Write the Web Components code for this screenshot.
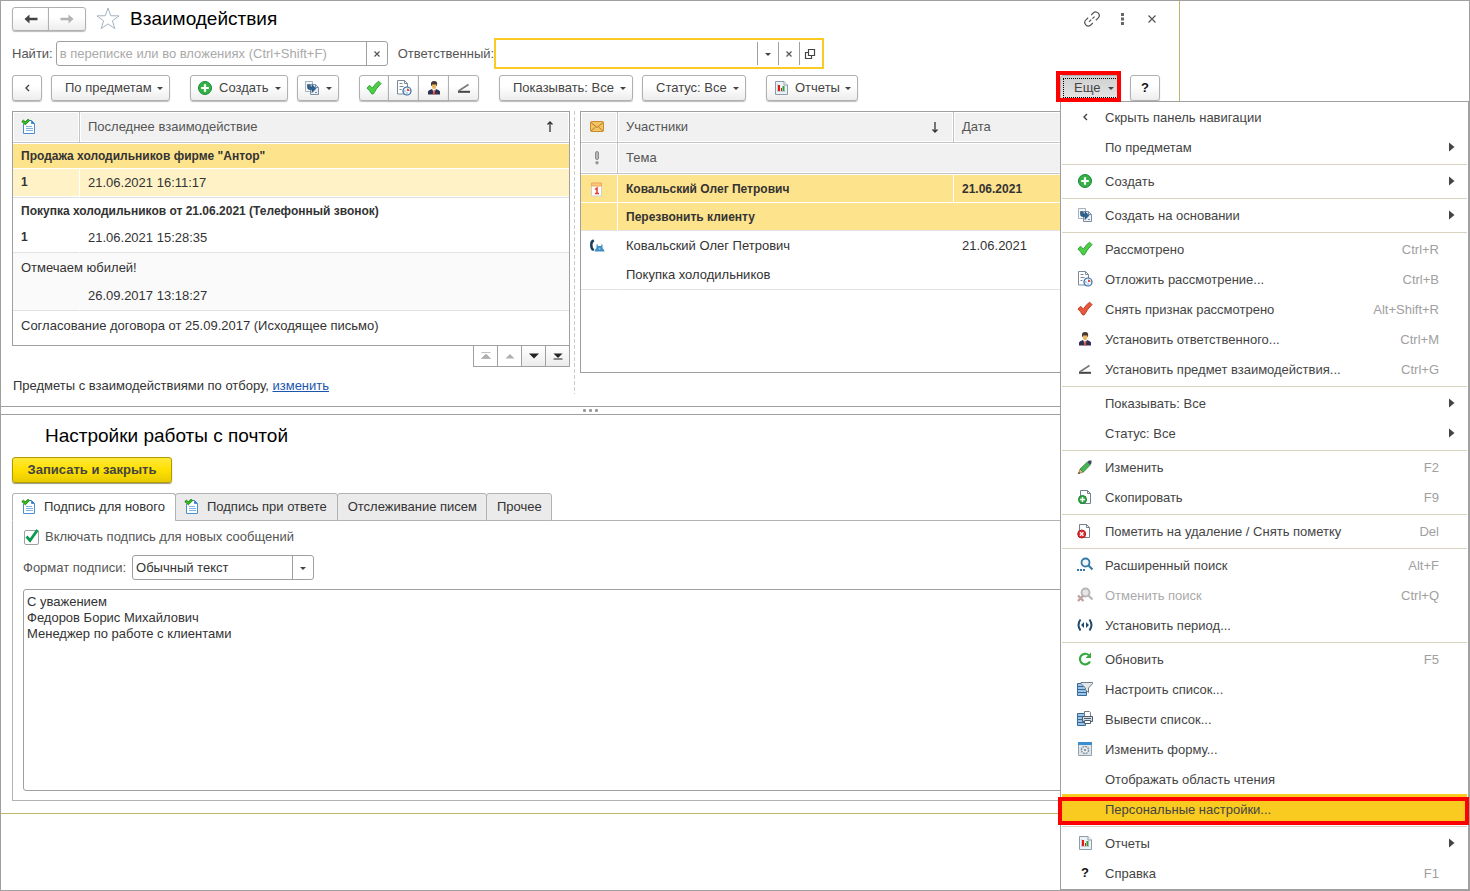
<!DOCTYPE html>
<html lang="ru">
<head>
<meta charset="utf-8">
<title>Взаимодействия</title>
<style>
  body { margin: 0; background: #fff; color: #333; font: 13px/16px "Liberation Sans", Arial, sans-serif; }
</style>
</head>
<body>
<app-shell></app-shell>

<script>
const define = (name, html, setup) => {
  const template = document.createElement('template');
  template.innerHTML = html;
  customElements.define(name, class extends HTMLElement {
    constructor() {
      super();
      this.attachShadow({ mode: 'open' }).append(template.content.cloneNode(true));
    }
    connectedCallback() { if (setup) setup(this, this.shadowRoot); }
  });
};

/* ---------- icons ---------- */
const check = 'M1 8.2 L3.4 5.4 Q5 6 6.4 8.2 Q9 3.6 12.6 1.2 L15 3.6 Q10.6 7.6 7.4 13.8 L5.8 14 Q4 10.6 1 8.2z';
const ICONS = {
  back: '<path d="M1.500 8l5-4.500v3.200h8v2.600h-8v3.200z" fill="#444"/>',
  forward: '<path d="M14.500 8l-5-4.500v3.200h-8v2.600h8v3.200z" fill="#b3b3b3"/>',
  left: '<path d="M10 5 7 8l3 3" fill="none" stroke="#444" stroke-width="1.400"/>',
  cross: '<path d="M5.500 5.500l5 5m0-5l-5 5" fill="none" stroke="#555" stroke-width="1.200"/>',
  close: '<path d="M4.500 4.500l7 7m0-7l-7 7" fill="none" stroke="#555" stroke-width="1.200"/>',
  caret: '<path d="M5 7h6L8 10z" fill="#444"/>',
  open: '<path d="M6.500 3.500h6v6h-6zM6.500 6.500h-3v6h6v-3" fill="none" stroke="#444" stroke-width="1.200"/>',
  dots: '<path d="M7 2h3v3H7zm0 4.500h3v3H7zM7 11h3v3H7z" fill="#666"/>',
  link: '<g fill="none" stroke="#555" stroke-width="1.200" transform="rotate(-43 8 8)"><path d="M6 4.500H3a3.500 3.500 0 0 0 0 7h3M10 4.500h3a3.500 3.500 0 0 1 0 7h-3"/><path d="M4 8h8" stroke-dasharray="3 1.500"/></g>',
  plus: '<circle cx="8" cy="8" r="6.500" fill="#35b045" stroke="#188a34"/><path d="M8 4.200v7.600M4.200 8h7.600" stroke="#fff" stroke-width="2.200"/>',
  based: '<path d="M1.500 1.500h7v10h-7z" fill="#f4f7fa" stroke="#a7b2bd"/><path d="M6.500 4.500h5l3 3v7h-8z" fill="#e9eff5" stroke="#7d90a3"/><path d="M11.500 4.500v3h3M11 12.500h2" fill="none" stroke="#7d90a3"/><path d="M3.500 4.500v3q0 2 2 2h2.500v3L12 8.500 8 4.800V7H5.800V4.500z" fill="#2c6390" stroke="#1b4770" stroke-width=".6"/>',
  check: `<path d="${check}" fill="#4fce48" stroke="#2fa233" stroke-width="1"/>`,
  uncheck: `<path d="${check}" fill="#e8583c" stroke="#c13b25" stroke-width="1"/>`,
  defer: '<path d="M1.500 .5h7l3 3v10.500h-10z" fill="#fff" stroke="#7b8a99"/><path d="M8.500 .5v3h3M3.500 3.500h3M3.500 6.500h4M3.500 9.500h2" fill="none" stroke="#7b8a99"/><circle cx="11" cy="11" r="4" fill="#eef6ff" stroke="#2f6ca3" stroke-width="1.200"/><path d="M11 11V8.500A2.500 2.500 0 0 1 13.500 11z" fill="#e34a38"/><path d="M8.500 11h1M11 12.500v1" stroke="#2f6ca3"/>',
  person: '<path d="M5 5q-.5-4 3-4 4 0 3 4l-.5 1h-5z" fill="#473a35"/><path d="M6 4.500h4.200V7Q9.800 9.200 8 9.300 6.200 9.200 6 7z" fill="#f0b65e"/><path d="M2 14.500v-3q.3-1.500 4-2.500l2 2 2-2q3.700 1 4 2.500v3z" fill="#2c3154"/><path d="M6.500 9h3l-1 5.500h-1z" fill="#fff"/><path d="M7.500 10h1.200l.6 4.500H7z" fill="#d94a32"/>',
  angle: '<path d="M2 11.800h12" stroke="#444" stroke-width="2"/><path d="M2.500 11 12.500 4.500" stroke="#777" stroke-width="1.500"/>',
  report: '<path d="M2.500 1.500h8.500l3.500 3.500v9.500h-12z" fill="#edf2f6" stroke="#8c9caa"/><path d="M11 1.500V5h3.500" fill="#fff" stroke="#8c9caa"/><path d="M4.500 4v7.500h8" fill="none" stroke="#c3ccd4"/><path d="M5 5h2v6H5zM8 8h1v3H8z" fill="#e11b12"/><path d="M9.500 6h2v5h-2z" fill="#319c35"/>',
  pencil: '<path d="M1.500 14.500 3 10l3.200 3.200z" fill="#e9b973" stroke="#8d6a3c" stroke-width=".7"/><path d="M3 10 10.300 3l3 3-7.100 7.200z" fill="#48b455" stroke="#2c8339" stroke-width=".7"/><path d="M10.300 3 12 1.500h2.500V4l-1.200 2z" fill="#3a4a5c"/><path d="M1 15l.8-2 1.400 1.200z" fill="#333"/>',
  copy: '<path d="M3.500 1.500h7l3 3v10h-10z" fill="#fff" stroke="#73828f"/><path d="M10.500 1.500v3h3" fill="none" stroke="#73828f"/><circle cx="5.500" cy="10.500" r="4" fill="#2fab40" stroke="#1b8532"/><path d="M5.500 8v5M3 10.500h5" stroke="#fff" stroke-width="1.400"/>',
  remove: '<path d="M2.500 1.500h7l3 3v10h-10z" fill="#fff" stroke="#73828f"/><path d="M9.500 1.500v3h3" fill="none" stroke="#73828f"/><circle cx="4.700" cy="11" r="4" fill="#dd2f35" stroke="#b31c24"/><path d="M3 9.300l3.400 3.400m0-3.400L3 12.700" stroke="#fff" stroke-width="1.300"/>',
  search: '<circle cx="8.500" cy="5.500" r="4" fill="#eef6fb" stroke="#327ba8" stroke-width="1.800"/><path d="M11.500 8.500l4 4" stroke="#327ba8" stroke-width="2.200"/><path d="M0 12h2v2H0zm3 0h2v2H3zm3 0h2v2H6z" fill="#327ba8"/>',
  nosearch: '<circle cx="8.500" cy="5.500" r="4" fill="#e5e5e5" stroke="#b5b5b5" stroke-width="1.800"/><path d="M11.500 8.500l4 4" stroke="#b5b5b5" stroke-width="2.200"/><path d="M1 8.500l5.500 5.500m0-5.500L1 14" stroke="#bfa3a0" stroke-width="2.400"/>',
  period: '<path d="M3.500 2.500q-4 5.500 0 11M12.500 2.500q4 5.500 0 11" fill="none" stroke="#1f4b6e" stroke-width="2"/><path d="M7 5v6L4 8zM9 5v6l3-3z" fill="#1f4b6e"/>',
  refresh: '<path d="M13 10.500A5.300 5.300 0 1 1 11.700 4" fill="none" stroke="#36a93f" stroke-width="2.200"/><path d="M14 1.500V7H8.500z" fill="#36a93f"/>',
  tune: '<path d="M.5 2.500h9v12h-9z" fill="#9cc4e6" stroke="#356a99"/><path d="M1 5.500h8M1 8.500h8M1 11.500h8" stroke="#356a99"/><path d="M4 1.500h11.500v1.200L11.500 7v4.500L8.500 9V7L4 2.700z" fill="#e3e7ea" stroke="#6f7d89"/>',
  print: '<path d="M.5 2.500h8v12h-8z" fill="#9cc4e6" stroke="#356a99"/><path d="M1 5.500h8M1 8.500h8M1 11.500h8" stroke="#356a99"/><path d="M7.500.5h5l1 1v5h-6z" fill="#fff" stroke="#6f7d89"/><path d="M5.500 5.500h10v5h-10z" fill="#d8dee3" stroke="#4c5d6c"/><path d="M7.500 9.500h6v3h-6z" fill="#fff" stroke="#4c5d6c"/><path d="M7 7.500h7" stroke="#4c5d6c"/>',
  form: '<path d="M1.500 1.500h13v13h-13z" fill="#dfe6ec" stroke="#8fa0ae"/><path d="M1 1h14v3H1z" fill="#3b8fd0"/><circle cx="8" cy="9" r="3.500" fill="#f4f6f8" stroke="#8b959e" stroke-width="1.600" stroke-dasharray="2 .7"/><circle cx="8" cy="9" r="1.300" fill="#8b959e"/>',
  checkdoc: '<path d="M2.500 5v9.500h11V4.500L10.500 1.500H8" fill="#fff" stroke="#4a8fd0"/><path d="M10.500 1.500v3h3" fill="#2f78c0" stroke="#4a8fd0"/><path d="M5 7.500h6M5 9.500h7M5 11.500h7" stroke="#7fb2e2"/><path d="M.8 2.600 2.400 1.200l1.800 1.600L7.200.3l1.500 1.200-4.300 4.300z" fill="#35c11f" stroke="#14780f" stroke-width=".9"/>',
  mail: '<rect x="1.500" y="2.500" width="13" height="10" rx="1" fill="#f3c463" stroke="#c88b2e"/><path d="M2 3.500l6 5 6-5M2 12l4.500-4M14 12 9.500 8" fill="none" stroke="#b87a24"/>',
  important: '<rect x="6.500" y="1.500" width="3" height="8" rx="1.500" fill="#b9b9b9" stroke="#8c8c8c"/><circle cx="8" cy="12.800" r="1.700" fill="#979797"/>',
  calendar: '<path d="M2.500 2h10v13h-10z" fill="#fff" stroke="#cfcfd6"/><path d="M2.500 2h10v3h-10z" fill="#fbc878" stroke="#f1a955"/><path d="M6 8.500l2-1.500v5.500M6 12.500h4" fill="none" stroke="#e23c2a" stroke-width="1.500"/>',
  phone: '<path d="M4.500 1.500Q1 1.500 1 7t3.500 6l.8-2q-1.800-1-1.800-4t1.800-3.500z" fill="#18415f"/><path d="M5.500 13.500q0-2 2-3.500V6.500h1.300V8h3.400V6.500h1.300V10q2 1.500 2 3.500z" fill="#3f8fc4"/><circle cx="10.500" cy="10.800" r="1" fill="#8fc3e6"/>',
  star: '<path d="M12 1l2.700 7.700 8.300.2-6.600 4.900 2.400 7.800-6.800-4.700-6.800 4.700 2.400-7.800L1 8.900l8.300-.2z" fill="#fff" stroke="#a5b3c1"/>',
  up: '<path d="M8 3v10M5.500 5.500 8 3l2.500 2.500" fill="none" stroke="#333" stroke-width="1.300"/>',
  down: '<path d="M8 3v10M5.500 10.500 8 13l2.500-2.500" fill="none" stroke="#333" stroke-width="1.300"/>',
  first: '<path d="M3.500 4.500h9M3.500 10.500h9L8 6z" fill="#b0b0b0" stroke="#b0b0b0" stroke-width=".8"/>',
  prev: '<path d="M3.500 10.500h9L8 6z" fill="#b0b0b0"/>',
  next: '<path d="M3 5.500h10l-5 5z" fill="#222"/>',
  last: '<path d="M3.500 5.500h9L8 10z" fill="#222"/><path d="M3.500 11h9" stroke="#222"/>',
  submenu: '<path d="M5 3.500v9l5.500-4.500z" fill="#444"/>',
  tick: '<path d="M3.500 7.500 7 11.500 14.500 1" fill="none" stroke="#0a9a50" stroke-width="2.800"/>'
};
define('ui-icon', `
<style>
  :host { display: inline-block; flex: none; width: 16px; height: 16px; }
  svg { display: block; width: 100%; height: 100%; }
</style>`, (host, root) => {
  const name = host.getAttribute('name');
  if (!ICONS[name] || root.querySelector('svg')) return;
  const box = name === 'star' ? 24 : 16;
  root.append(document.createRange().createContextualFragment(
    `<svg viewBox="0 0 ${box} ${box}" aria-hidden="true">${ICONS[name]}</svg>`));
});

/* ---------- buttons ---------- */
define('ui-button', `
<style>
  :host { display: inline-flex; flex: none; }
  button { display: flex; flex: 1; align-items: center; justify-content: center; box-sizing: border-box;
    height: 26px; padding: 0 6px; border: 1px solid #b0b0b0; border-radius: 3px; color: #444;
    background: linear-gradient(#fff 40%, #ededed); box-shadow: 0 1px 1px #bbb; font: inherit; white-space: nowrap; }
  .caret { display: none; margin: 0 -5px; }
  :host([menu]) button { justify-content: space-between; }
  :host([menu]) .caret { display: block; }
  .label { display: flex; align-items: center; gap: 6px; }
  :host([menu]) .label { padding-left: 7px; }
  :host([tight]) .label { padding-left: 0; }
  :host([slim]) button { height: 24px; }
  :host([joined]) button { border-radius: 0; margin-left: -1px; }
  :host([start]) button { border-radius: 3px 0 0 3px; margin-left: 0; }
  :host([end]) button { border-radius: 0 3px 3px 0; }
  :host([pressed]) button { background: linear-gradient(#cfcfcf, #e6e6e6); outline: 1px dotted #000; outline-offset: -4px; }
  :host([primary]) button { color: #444; font-weight: bold; border-color: #b09a00; box-shadow: 0 1px 1px #998; background: linear-gradient(#ffe83a, #ffe000 50%, #e8cb00); }
</style>
<button type="button"><span class="label"><slot></slot></span><ui-icon class="caret" name="caret"></ui-icon></button>`,
(host, root) => {
  if (host.title) { root.querySelector('button').setAttribute('aria-label', host.title); }
  if (host.hasAttribute('menu')) root.querySelector('button').setAttribute('aria-haspopup', 'menu');
});

/* ---------- callout frame drawn over its content ---------- */
define('callout-frame', `
<style>
  :host { display: block; position: relative; }
  .frame { position: absolute; inset: var(--frame-inset, -4px); border: 4px solid #f00; pointer-events: none; z-index: 3; }
</style>
<slot></slot><div class="frame"></div>`);

/* ---------- title ---------- */
define('title-bar', `
<style>
  :host { display: flex; align-items: center; height: 36px; }
  .nav { display: flex; width: 74px; }
  .nav ui-button { flex: 1; }
  .star { width: 24px; height: 24px; margin: 0 10px; }
  h1 { flex: 1; margin: 0; font-size: 19px; line-height: 22px; font-weight: normal; color: #000; }
  .tools { display: flex; gap: 14px; }
  .tools button { display: flex; padding: 0; border: 0; background: none; }
</style>
<div class="nav">
  <ui-button slim joined start title="Назад"><ui-icon name="back"></ui-icon></ui-button>
  <ui-button slim joined end title="Вперед"><ui-icon name="forward"></ui-icon></ui-button>
</div>
<ui-icon class="star" name="star"></ui-icon>
<h1>Взаимодействия</h1>
<div class="tools">
  <button type="button" aria-label="Ссылка"><ui-icon name="link"></ui-icon></button>
  <button type="button" aria-label="Еще"><ui-icon name="dots"></ui-icon></button>
  <button type="button" aria-label="Закрыть"><ui-icon name="close"></ui-icon></button>
</div>`);

/* ---------- search fields ---------- */
define('filter-row', `
<style>
  :host { display: flex; align-items: center; height: 33px; color: #555; }
  label { white-space: nowrap; }
  .field { display: flex; box-sizing: border-box; border: 1px solid #a0a0a0; border-radius: 3px; height: 25px; width: 332px; margin: 0 10px 0 3px; }
  .field.active { border: 2px solid #fbcb23; border-radius: 0; height: 31px; width: 330px; margin: 0; padding: 2px; }
  input { flex: 1; min-width: 0; padding: 0 3px; border: 0; outline: 0; background: none; font: inherit; color: #333; }
  input::placeholder { color: #aaa; opacity: 1; }
  button { display: flex; align-items: center; justify-content: center; width: 21px; padding: 0; border: 0; border-left: 1px solid #a0a0a0; background: none; }
</style>
<label for="find">Найти:</label>
<div class="field"><input id="find" type="text" placeholder="в переписке или во вложениях (Ctrl+Shift+F)"><button type="button" aria-label="Очистить поиск"><ui-icon name="cross"></ui-icon></button></div>
<label for="owner">Ответственный:</label>
<div class="field active"><input id="owner" type="text"><button type="button" aria-label="Выбрать"><ui-icon name="caret"></ui-icon></button><button type="button" aria-label="Очистить"><ui-icon name="cross"></ui-icon></button><button type="button" aria-label="Открыть"><ui-icon name="open"></ui-icon></button></div>`);

/* ---------- command bar ---------- */
define('command-bar', `
<style>
  :host { display: flex; gap: 9px; padding: 5px 0 10px; }
  .gap { margin-left: 11px; }
  .spacer { flex: 1; }
  .group { display: flex; width: 120px; }
  .group ui-button { flex: 1; }
  .w30 { width: 30px; }
  .views { width: 119px; }
  .create { width: 98px; }
  .based { width: 42px; }
  .show { width: 134px; }
  .state { width: 104px; }
  .reports { width: 92px; }
  .more { width: 61px; }
  callout-frame { --frame-inset: -4px 0 -1px -4px; }
  .help { color: #111; font-weight: bold; }
</style>
<ui-button class="w30" title="Скрыть панель навигации"><ui-icon name="left"></ui-icon></ui-button>
<ui-button class="views" menu>По предметам</ui-button>
<ui-button class="create gap" menu tight><ui-icon name="plus"></ui-icon>Создать</ui-button>
<ui-button class="based" menu tight title="Создать на основании"><ui-icon name="based"></ui-icon></ui-button>
<div class="group gap">
  <ui-button joined start title="Рассмотрено"><ui-icon name="check"></ui-icon></ui-button>
  <ui-button joined title="Отложить рассмотрение"><ui-icon name="defer"></ui-icon></ui-button>
  <ui-button joined title="Установить ответственного"><ui-icon name="person"></ui-icon></ui-button>
  <ui-button joined end title="Установить предмет взаимодействия"><ui-icon name="angle"></ui-icon></ui-button>
</div>
<ui-button class="show gap" menu>Показывать: Все</ui-button>
<ui-button class="state" menu>Статус: Все</ui-button>
<ui-button class="reports gap" menu tight><ui-icon name="report"></ui-icon>Отчеты</ui-button>
<span class="spacer"></span>
<callout-frame><ui-button class="more" menu pressed>Еще</ui-button></callout-frame>
<ui-button class="w30" title="Справка"><b class="help">?</b></ui-button>`);

/* ---------- tables ---------- */
const tableStyle = `
  table { width: 100%; border-collapse: separate; border-spacing: 0; table-layout: fixed; }
  th, td { padding: 0 8px; text-align: left; font-weight: normal; white-space: nowrap; overflow: hidden; box-sizing: border-box; }
  th { height: 31px; color: #555; background: #f1f1f1; border-bottom: 1px solid #c4c4c4; box-shadow: inset 0 0 0 1px #fff; }
  td + td { border-left: 1px solid transparent; }
  th + th { border-left: 1px solid #c4c4c4; }
  .sort { display: flex; justify-content: space-between; align-items: center; }
  .bold td { font-weight: bold; font-size: 12px; }
  th ui-icon, td ui-icon { display: block; }
  td { height: 29px; }
  tr.last td { border-bottom: 1px solid #e2e2e2; }
  tr.select td { background: #fee38d; border-bottom: 1px solid #fff; }
`;
define('subject-list', `
<style>
  :host { display: block; }
  .frame { border: 1px solid #a0a0a0; height: 233px; overflow: hidden; }
  ${tableStyle}
  .first { width: 66px; }
  .sort { padding-right: 3px; }
  tr.select td { height: 26px; border-top: 1px solid #fff; }
  tr.soft td { background: #fef2c6; border-bottom: 1px solid #e2e2e2; height: 29px; box-shadow: inset 0 -1px #fff; }
  tr.soft td + td { border-left: 1px solid #fff; }
  td.count { font-weight: bold; font-size: 12px; padding-bottom: 3px; }
  tr.high td { height: 26px; }
  tr.alt td { background: #fafafa; }
  .pager { display: flex; justify-content: flex-end; margin-top: -1px; }
  .pager button { display: flex; align-items: center; justify-content: center; box-sizing: border-box; width: 25px; height: 22px; margin-left: -1px; padding: 0; border: 1px solid #a0a0a0; background: #fff; }
  .pager button:nth-child(n+3) { background: linear-gradient(#fff, #ececec); }
  p { margin: 11px 0 0 1px; }
  a { color: #1c55ae; }
</style>
<div class="frame"><table>
  <colgroup><col class="first"><col></colgroup>
  <thead><tr><th><ui-icon name="checkdoc"></ui-icon></th><th><span class="sort">Последнее взаимодействие<ui-icon name="up"></ui-icon></span></th></tr></thead>
  <tbody>
    <tr class="select bold"><td colspan="2">Продажа холодильников фирме "Антор"</td></tr>
    <tr class="soft"><td class="count">1</td><td>21.06.2021 16:11:17</td></tr>
    <tr class="bold high"><td colspan="2">Покупка холодильников от 21.06.2021 (Телефонный звонок)</td></tr>
    <tr class="last"><td class="count">1</td><td>21.06.2021 15:28:35</td></tr>
    <tr class="alt"><td colspan="2">Отмечаем юбилей!</td></tr>
    <tr class="alt last"><td></td><td>26.09.2017 13:18:27</td></tr>
    <tr><td colspan="2">Согласование договора от 25.09.2017 (Исходящее письмо)</td></tr>
  </tbody>
</table></div>
<div class="pager">
  <button type="button" aria-label="В начало" disabled><ui-icon name="first"></ui-icon></button>
  <button type="button" aria-label="Вверх" disabled><ui-icon name="prev"></ui-icon></button>
  <button type="button" aria-label="Вниз"><ui-icon name="next"></ui-icon></button>
  <button type="button" aria-label="В конец"><ui-icon name="last"></ui-icon></button>
</div>
<p>Предметы с взаимодействиями по отбору, <a href="#filter">изменить</a></p>`);

define('interaction-list', `
<style>
  :host { display: block; }
  .frame { border: 1px solid #a0a0a0; height: 260px; overflow: hidden; }
  ${tableStyle}
  .mark { width: 36px; }
  .people { width: 336px; }
  tr.select td + td { border-left: 1px solid #fff; }
  tr.top td { height: 29px; border-top: 1px solid #fff; }
  tr.end td { height: 28px; border-bottom-color: #e2e2e2; }
  tr.last td { height: 30px; }
  .sort { padding-right: 2px; }
</style>
<div class="frame"><table>
  <colgroup><col class="mark"><col class="people"><col></colgroup>
  <thead>
    <tr><th><ui-icon name="mail"></ui-icon></th><th><span class="sort">Участники<ui-icon name="down"></ui-icon></span></th><th>Дата</th></tr>
    <tr><th><ui-icon name="important"></ui-icon></th><th colspan="2">Тема</th></tr>
  </thead>
  <tbody>
    <tr class="select bold top"><td><ui-icon name="calendar"></ui-icon></td><td>Ковальский Олег Петрович</td><td>21.06.2021</td></tr>
    <tr class="select bold end"><td></td><td colspan="2">Перезвонить клиенту</td></tr>
    <tr><td><ui-icon name="phone"></ui-icon></td><td>Ковальский Олег Петрович</td><td>21.06.2021</td></tr>
    <tr class="last"><td></td><td colspan="2">Покупка холодильников</td></tr>
  </tbody>
</table></div>`);

/* ---------- mail settings ---------- */
define('mail-settings', `
<style>
  :host { display: block; padding: 0 19px 12px 11px; }
  h2 { margin: 0 0 0 33px; font-size: 19px; line-height: 42px; font-weight: normal; color: #000; }
  .save { width: 160px; }
  .tabs { display: flex; margin-top: 10px; position: relative; }
  .tabs button { display: flex; align-items: center; gap: 7px; box-sizing: border-box; height: 28px; padding: 0 9px 0 10px; margin: 0 0 -1px -1px; border: 1px solid #b3b3b3; border-radius: 3px 3px 0 0; background: #ebebeb; color: #333; font: inherit; white-space: nowrap; }
  .tabs .doc { padding-left: 8px; padding-right: 10px; }
  .tabs button.current { margin-left: 0; background: #fff; border-bottom-color: #fff; }
  .panel { border: 1px solid #b3b3b3; padding: 8px 10px 9px; }
  .check { display: flex; align-items: center; gap: 5px; color: #555; }
  .box { display: grid; width: 17px; height: 16px; }
  .box > * { grid-area: 1 / 1; }
  .box input { appearance: none; margin: 1px; width: 15px; height: 15px; border: 1px solid #a0a0a0; border-radius: 2px; background: #fff; }
  .box ui-icon { visibility: hidden; pointer-events: none; z-index: 1; }
  .box input:checked + ui-icon { visibility: visible; }
  .format { display: flex; align-items: center; gap: 6px; margin: 10px 0 9px; color: #555; }
  .select { display: grid; width: 182px; height: 25px; }
  .select > * { grid-area: 1 / 1; }
  select { appearance: none; box-sizing: border-box; width: 100%; height: 25px; padding: 0 24px 0 3px; border: 1px solid #a0a0a0; border-radius: 3px; background: #fff; color: #333; font: inherit; }
  .drop { justify-self: end; display: flex; align-items: center; justify-content: center; width: 20px; margin: 1px 1px 1px 0; border-left: 1px solid #a0a0a0; pointer-events: none; }
  textarea { display: block; box-sizing: border-box; width: 100%; padding: 4px 3px; border: 1px solid #a0a0a0; border-radius: 3px; outline: 0; resize: none; color: #333; background: #fff; font: inherit; overflow: hidden; }
</style>
<h2>Настройки работы с почтой</h2>
<ui-button class="save" primary>Записать и закрыть</ui-button>
<div class="tabs" role="tablist">
  <button type="button" role="tab" aria-selected="true" class="doc current"><ui-icon name="checkdoc"></ui-icon>Подпись для нового</button>
  <button type="button" role="tab" class="doc"><ui-icon name="checkdoc"></ui-icon>Подпись при ответе</button>
  <button type="button" role="tab">Отслеживание писем</button>
  <button type="button" role="tab">Прочее</button>
</div>
<div class="panel">
  <label class="check"><span class="box"><input type="checkbox" checked><ui-icon name="tick"></ui-icon></span>Включать подпись для новых сообщений</label>
  <div class="format"><label for="format">Формат подписи:</label>
    <span class="select"><select id="format"><option>Обычный текст</option><option>HTML</option></select><span class="drop"><ui-icon name="caret"></ui-icon></span></span>
  </div>
  <textarea rows="12" aria-label="Текст подписи">С уважением
Федоров Борис Михайлович
Менеджер по работе с клиентами</textarea>
</div>`);

/* ---------- popup menu ---------- */
define('menu-item', `
<style>
  :host { display: block; }
  button { display: flex; align-items: center; width: 100%; height: 30px; padding: 0 13px 0 15px; border: 0; background: none; color: #444; font: inherit; text-align: left; white-space: nowrap; }
  .icon { display: flex; justify-content: center; width: 16px; margin-right: 12px; flex: none; color: #111; font-weight: bold; }
  .text { flex: 1; padding-top: 2px; }
  kbd { font: inherit; color: #a0a0a0; margin-right: 15px; padding-top: 2px; }
  .sub { margin-right: -6px; }
  :host([disabled]) button { color: #aaa; }
  :host([current]) button { background: #f9ca20; }
</style>
<button type="button" role="menuitem"><span class="icon"></span><span class="text"><slot></slot></span></button>`,
(host, root) => {
  const button = root.querySelector('button');
  if (button.childElementCount > 2) return;
  const icon = host.getAttribute('icon');
  if (icon === 'help') root.querySelector('.icon').textContent = '?';
  else if (icon) root.querySelector('.icon').innerHTML = `<ui-icon name="${icon}"></ui-icon>`;
  const key = document.createElement('kbd');
  key.textContent = host.getAttribute('shortcut') || '';
  if (host.hasAttribute('submenu')) {
    button.setAttribute('aria-haspopup', 'menu');
    button.insertAdjacentHTML('beforeend', '<ui-icon class="sub" name="submenu"></ui-icon>');
  } else button.append(key);
  button.disabled = host.hasAttribute('disabled');
});
define('menu-line', `
<style>:host { display: block; height: 1px; margin: 2px 0 1px; background: #d8d3be; }</style>`);
define('popup-menu', `
<style>
  :host { display: block; box-sizing: border-box; padding: 0 1px 1px; border: 1px solid #a0a0a0; background: #fff; }
  callout-frame { --frame-inset: 3px -2px -1px -4px; }
</style>
<menu-item icon="left">Скрыть панель навигации</menu-item>
<menu-item submenu>По предметам</menu-item>
<menu-line></menu-line>
<menu-item icon="plus" submenu>Создать</menu-item>
<menu-line></menu-line>
<menu-item icon="based" submenu>Создать на основании</menu-item>
<menu-line></menu-line>
<menu-item icon="check" shortcut="Ctrl+R">Рассмотрено</menu-item>
<menu-item icon="defer" shortcut="Ctrl+B">Отложить рассмотрение...</menu-item>
<menu-item icon="uncheck" shortcut="Alt+Shift+R">Снять признак рассмотрено</menu-item>
<menu-item icon="person" shortcut="Ctrl+M">Установить ответственного...</menu-item>
<menu-item icon="angle" shortcut="Ctrl+G">Установить предмет взаимодействия...</menu-item>
<menu-line></menu-line>
<menu-item submenu>Показывать: Все</menu-item>
<menu-item submenu>Статус: Все</menu-item>
<menu-line></menu-line>
<menu-item icon="pencil" shortcut="F2">Изменить</menu-item>
<menu-item icon="copy" shortcut="F9">Скопировать</menu-item>
<menu-line></menu-line>
<menu-item icon="remove" shortcut="Del">Пометить на удаление / Снять пометку</menu-item>
<menu-line></menu-line>
<menu-item icon="search" shortcut="Alt+F">Расширенный поиск</menu-item>
<menu-item icon="nosearch" shortcut="Ctrl+Q" disabled>Отменить поиск</menu-item>
<menu-item icon="period">Установить период...</menu-item>
<menu-line></menu-line>
<menu-item icon="refresh" shortcut="F5">Обновить</menu-item>
<menu-item icon="tune">Настроить список...</menu-item>
<menu-item icon="print">Вывести список...</menu-item>
<menu-item icon="form">Изменить форму...</menu-item>
<menu-item>Отображать область чтения</menu-item>
<callout-frame><menu-item current>Персональные настройки...</menu-item></callout-frame>
<menu-line></menu-line>
<menu-item icon="report" submenu>Отчеты</menu-item>
<menu-item icon="help" shortcut="F1">Справка</menu-item>`,
host => host.setAttribute('role', 'menu'));

/* ---------- page ---------- */
define('app-shell', `
<style>
  :host { display: block; position: relative; box-sizing: border-box; min-height: 100vh; border: 1px solid #a0a0a0; }
  main { margin-right: 289px; border-right: 1px solid #bfb868; border-bottom: 1px solid #bfb868; }
  .form { padding: 0 19px 0 11px; }
  .lists { display: flex; padding-bottom: 12px; }
  subject-list { flex: 558 1 0; min-width: 0; }
  interaction-list { flex: 580 1 0; min-width: 0; }
  .divider { width: 1px; margin: 0 5px 0 4px; background: repeating-linear-gradient(#ccc 0 4px, #fff 4px 6px); height: 283px; }
  .splitter { display: flex; justify-content: center; align-items: center; gap: 3px; height: 7px; border: solid #a0a0a0; border-width: 1px 0; }
  .splitter i { width: 3px; height: 3px; border-radius: 1px; background: #999; }
  popup-menu { position: absolute; top: 100px; right: 0; width: 409px; z-index: 2; }
</style>
<main>
  <div class="form">
    <title-bar></title-bar>
    <filter-row></filter-row>
    <command-bar></command-bar>
    <div class="lists">
      <subject-list></subject-list>
      <div class="divider"></div>
      <interaction-list></interaction-list>
    </div>
  </div>
  <div class="splitter"><i></i><i></i><i></i></div>
  <mail-settings></mail-settings>
</main>
<popup-menu></popup-menu>`);
</script>
</body>
</html>
